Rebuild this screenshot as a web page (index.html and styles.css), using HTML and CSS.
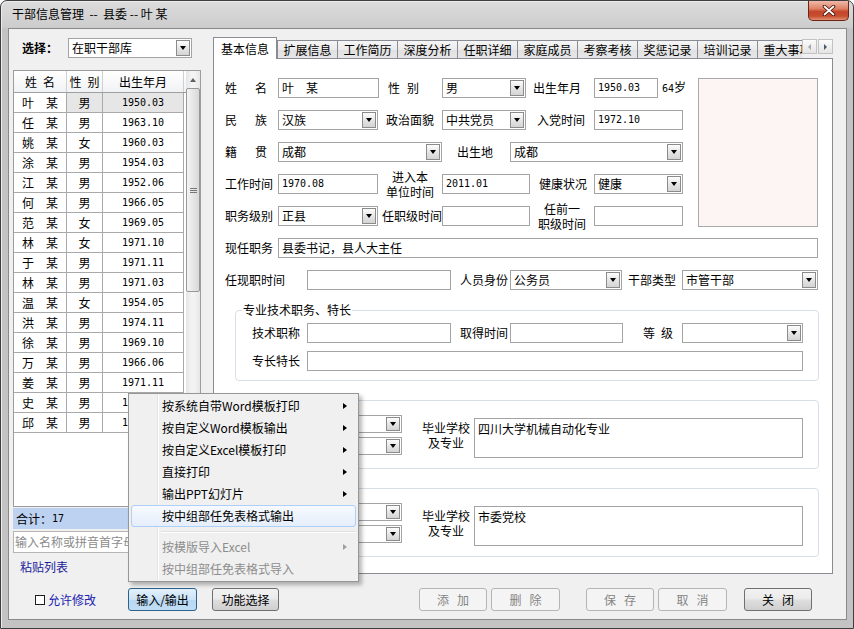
FILE: index.html
```html
<!DOCTYPE html>
<html lang="zh-CN">
<head>
<meta charset="utf-8">
<title>干部信息管理</title>
<link rel="stylesheet" href="styles.css">
</head>
<body>
<div class="win">
  <div class="titlebar">
    <span class="title">干部信息管理  --  县委 -- 叶 某</span>
    <div class="close"><svg width="14" height="11" viewBox="0 0 14 11"><path d="M2.5 1.5 L11.5 9.5 M11.5 1.5 L2.5 9.5" stroke="#4a1208" stroke-width="3.6" stroke-linecap="round"/><path d="M2.5 1.5 L11.5 9.5 M11.5 1.5 L2.5 9.5" stroke="#fff" stroke-width="1.8" stroke-linecap="round"/></svg></div>
  </div>
  <div class="client">
    <div class="main">
      <div class="left">
        <div class="selrow"><span class="sellbl">选择：</span><div class="f sel combo"><span class="tx">在职干部库</span><span class="dd"></span></div></div>
        <div class="gridbox">
          <div class="gridarea">
            <div class="gh"><div class="c c1"><span class="ls6">姓</span>名</div><div class="c c2"><span class="ls6">性</span>别</div><div class="c c3">出生年月</div></div>
            <div class="gr cur"><div class="c c1">叶　某</div><div class="c c2">男</div><div class="c c3 num">1950.03</div></div>
            <div class="gr"><div class="c c1">任　某</div><div class="c c2">男</div><div class="c c3 num">1963.10</div></div>
            <div class="gr"><div class="c c1">姚　某</div><div class="c c2">女</div><div class="c c3 num">1960.03</div></div>
            <div class="gr"><div class="c c1">涂　某</div><div class="c c2">男</div><div class="c c3 num">1954.03</div></div>
            <div class="gr"><div class="c c1">江　某</div><div class="c c2">男</div><div class="c c3 num">1952.06</div></div>
            <div class="gr"><div class="c c1">何　某</div><div class="c c2">男</div><div class="c c3 num">1966.05</div></div>
            <div class="gr"><div class="c c1">范　某</div><div class="c c2">女</div><div class="c c3 num">1969.05</div></div>
            <div class="gr"><div class="c c1">林　某</div><div class="c c2">女</div><div class="c c3 num">1971.10</div></div>
            <div class="gr"><div class="c c1">于　某</div><div class="c c2">男</div><div class="c c3 num">1971.11</div></div>
            <div class="gr"><div class="c c1">林　某</div><div class="c c2">男</div><div class="c c3 num">1971.03</div></div>
            <div class="gr"><div class="c c1">温　某</div><div class="c c2">女</div><div class="c c3 num">1954.05</div></div>
            <div class="gr"><div class="c c1">洪　某</div><div class="c c2">男</div><div class="c c3 num">1974.11</div></div>
            <div class="gr"><div class="c c1">徐　某</div><div class="c c2">男</div><div class="c c3 num">1969.10</div></div>
            <div class="gr"><div class="c c1">万　某</div><div class="c c2">男</div><div class="c c3 num">1966.06</div></div>
            <div class="gr"><div class="c c1">姜　某</div><div class="c c2">男</div><div class="c c3 num">1971.11</div></div>
            <div class="gr"><div class="c c1">史　某</div><div class="c c2">男</div><div class="c c3 num">1968.02</div></div>
            <div class="gr"><div class="c c1">邱　某</div><div class="c c2">男</div><div class="c c3 num">1970.05</div></div>
          </div>
          <div class="vscroll">
            <div class="sbtn"><span class="tri-up"></span></div>
            <div class="thumb"><span class="grip"></span></div>
            <div class="track"></div>
            <div class="sbtn"><span class="tri-down"></span></div>
          </div>
        </div>
        <div class="total">合计：<span class="num">17</span></div>
        <div class="search">输入名称或拼音首字母查询</div>
        <div class="paste">粘贴列表</div>
      </div>

      <div class="tabctl">
        <div class="strip">
          <div class="tablist">
            <div class="tab on">基本信息</div>
            <div class="tab">扩展信息</div>
            <div class="tab">工作简历</div>
            <div class="tab">深度分析</div>
            <div class="tab">任职详细</div>
            <div class="tab">家庭成员</div>
            <div class="tab">考察考核</div>
            <div class="tab">奖惩记录</div>
            <div class="tab">培训记录</div>
            <div class="tab">重大事项</div>
          </div>
          <div class="tarrs">
            <div class="tarr"><span class="tri-l"></span></div>
            <div class="tarr"><span class="tri-r"></span></div>
          </div>
        </div>
        <div class="page">
          <div class="top">
            <div class="topl">
              <div class="row">
                <span class="lb w53"><span class="ls18">姓</span>名</span>
                <div class="f w101">叶　某</div>
                <span class="lb w63 pl9"><span class="ls7">性</span>别</span>
                <div class="f sel w84"><span class="tx">男</span><span class="dd"></span></div>
                <span class="lb w68 pl7">出生年月</span>
                <div class="f w64"><span class="num">1950.03</span></div>
                <span class="lb pl4"><span class="num">64</span>岁</span>
              </div>
              <div class="row">
                <span class="lb w53"><span class="ls18">民</span>族</span>
                <div class="f sel w100"><span class="tx">汉族</span><span class="dd"></span></div>
                <span class="lb w64 pl8">政治面貌</span>
                <div class="f sel w84"><span class="tx">中共党员</span><span class="dd"></span></div>
                <span class="lb w68 pl11">入党时间</span>
                <div class="f w89"><span class="num">1972.10</span></div>
              </div>
              <div class="row">
                <span class="lb w53"><span class="ls18">籍</span>贯</span>
                <div class="f sel w164"><span class="tx">成都</span><span class="dd"></span></div>
                <span class="lb w68 pl15">出生地</span>
                <div class="f sel w173"><span class="tx">成都</span><span class="dd"></span></div>
              </div>
              <div class="row">
                <span class="lb w53">工作时间</span>
                <div class="f w100"><span class="num">1970.08</span></div>
                <span class="lb2 w64">进入本<br>单位时间</span>
                <div class="f w88"><span class="num">2011.01</span></div>
                <span class="lb w64 pl9">健康状况</span>
                <div class="f sel w89"><span class="tx">健康</span><span class="dd"></span></div>
              </div>
              <div class="row">
                <span class="lb w53">职务级别</span>
                <div class="f sel w100"><span class="tx">正县</span><span class="dd"></span></div>
                <span class="lb w64 pl4">任职级时间</span>
                <div class="f w88"></div>
                <span class="lb2 w64">任前一<br>职级时间</span>
                <div class="f w89"></div>
              </div>
            </div>
            <div class="photo"></div>
          </div>
          <div class="row">
            <span class="lb w53">现任职务</span>
            <div class="f w540">县委书记，县人大主任</div>
          </div>
          <div class="row last">
            <span class="lb w82">任现职时间</span>
            <div class="f w144"></div>
            <span class="lb w59 pl9">人员身份</span>
            <div class="f sel w112"><span class="tx">公务员</span><span class="dd"></span></div>
            <span class="lb w60 pl6">干部类型</span>
            <div class="f sel w136"><span class="tx">市管干部</span><span class="dd"></span></div>
          </div>

          <div class="grp g1">
            <div class="gt">专业技术职务、特长</div>
            <div class="grow first">
              <span class="lb w71 pl16">技术职称</span>
              <div class="f w144"></div>
              <span class="lb w59 pl9">取得时间</span>
              <div class="f w113"></div>
              <span class="lb w59 pl20"><span class="ls6">等</span>级</span>
              <div class="f sel w121"><span class="tx"></span><span class="dd"></span></div>
            </div>
            <div class="grow">
              <span class="lb w71 pl16">专长特长</span>
              <div class="f w496"></div>
            </div>
          </div>

          <div class="grp g2">
            <div class="gt gap"></div>
            <div class="edu">
              <div class="educol">
                <div class="er"><span class="lb w66"></span><div class="f sel h18 w100"><span class="tx"></span><span class="dd"></span></div></div>
                <div class="er"><span class="lb w66"></span><div class="f sel h18 w100"><span class="tx"></span><span class="dd"></span></div></div>
              </div>
              <span class="lb2 edul">毕业学校<br>及专业</span>
              <div class="f ta">四川大学机械自动化专业</div>
            </div>
          </div>

          <div class="grp g2">
            <div class="gt gap"></div>
            <div class="edu">
              <div class="educol">
                <div class="er"><span class="lb w66"></span><div class="f sel h18 w100"><span class="tx"></span><span class="dd"></span></div></div>
                <div class="er"><span class="lb w66"></span><div class="f sel h18 w100"><span class="tx"></span><span class="dd"></span></div></div>
              </div>
              <span class="lb2 edul">毕业学校<br>及专业</span>
              <div class="f ta">市委党校</div>
            </div>
          </div>
        </div>
      </div>
    </div>

    <div class="bottom">
      <div class="chkgrp"><span class="cb"></span><span class="chklbl">允许修改</span></div>
      <div class="btn b-io">输入/输出</div>
      <div class="btn b-fn">功能选择</div>
      <div class="btn dis b-add"><span class="ls8">添</span>加</div>
      <div class="btn dis b-del"><span class="ls8">删</span>除</div>
      <div class="btn dis b-save"><span class="ls8">保</span>存</div>
      <div class="btn dis b-cancel"><span class="ls8">取</span>消</div>
      <div class="btn b-close"><span class="ls8">关</span>闭</div>
    </div>
  </div>

  <div class="menu">
    <div class="mi">按系统自带Word模板打印<i class="arr"></i></div>
    <div class="mi">按自定义Word模板输出<i class="arr"></i></div>
    <div class="mi">按自定义Excel模板打印<i class="arr"></i></div>
    <div class="mi">直接打印<i class="arr"></i></div>
    <div class="mi">输出PPT幻灯片<i class="arr"></i></div>
    <div class="mi hl">按中组部任免表格式输出</div>
    <div class="msep"></div>
    <div class="mi dis">按模版导入Excel<i class="arr"></i></div>
    <div class="mi dis">按中组部任免表格式导入</div>
  </div>
</div>
</body>
</html>
```
FILE: styles.css
```css
*{box-sizing:border-box}
html,body{margin:0;padding:0}
body{width:854px;height:629px;overflow:hidden;background:#fff;font-family:"Noto Sans CJK SC","Noto Sans",sans-serif;font-size:12px;line-height:14px;color:#000}
.num{font-family:"DejaVu Sans Mono","Liberation Mono",monospace;font-size:10px}

/* window frame */
.win{position:relative;width:854px;height:629px;border:1px solid #3e3e3e;border-radius:7px 7px 0 0;background:linear-gradient(#dcdcdc 0,#cdcdcd 26px,#c3c3c3 28px,#c3c3c3 100%);display:flex;flex-direction:column;box-shadow:inset 1px 1px 0 #ececec}
.titlebar{height:27px;flex:none;display:flex;align-items:flex-start;padding-left:11px}
.title{margin-top:6px;white-space:pre}
.close{margin-left:auto;margin-right:4px;width:41px;height:20px;border:1px solid #6a2418;border-top:0;border-radius:0 0 5px 5px;background:linear-gradient(#f0b9a9 0,#de8367 40%,#c4452b 56%,#c84f31 80%,#e29072 100%);display:flex;align-items:center;justify-content:center}
.client{flex:none;margin:0 6px 0 7px;height:592px;border:1px solid #8a8a8a;background:#f0f0f0;display:flex;flex-direction:column}
.main{display:flex;height:549px;flex:none}

/* left panel */
.left{margin-left:4px;width:188px;flex:none;display:flex;flex-direction:column}
.selrow{margin-top:9px;height:19px;display:flex;align-items:center;padding-left:9px}
.sellbl{width:46px;font-weight:bold;flex:none}
.combo{width:124px;height:19px}
.gridbox{margin-top:13px;height:437px;border:1px solid #9c9c9c;background:#fff;display:flex}
.gridarea{width:172px;flex:none}
.gh{display:flex;height:22px;border-bottom:1px solid #a0a0a0;background:linear-gradient(#ffffff,#f1f2f4)}
.gh .c{border-right:1px solid #d0d0d0}
.gr{display:flex;height:20px;border-bottom:1px solid #a9a9a9;width:170px}
.c{display:flex;align-items:center;justify-content:center;flex:none;border-right:1px solid #a9a9a9;white-space:nowrap}
.c1{width:53px}
.c2{width:36px}
.c3{width:81px}
.gr.cur .c2,.gr.cur .c3{background:#e6e6e6}
.ls6{margin-right:6px}
.ls7{margin-right:7px}
.ls8{margin-right:8px}
.ls18{margin-right:18px}
.vscroll{width:14px;flex:none;display:flex;flex-direction:column;background:linear-gradient(to right,#e6e6e6,#f3f3f3 40%,#f3f3f3 60%,#e6e6e6)}
.sbtn{height:17px;flex:none;display:flex;align-items:center;justify-content:center}
.tri-up{width:0;height:0;border-left:3.5px solid transparent;border-right:3.5px solid transparent;border-bottom:4px solid #606060}
.tri-down{width:0;height:0;border-left:3.5px solid transparent;border-right:3.5px solid transparent;border-top:4px solid #606060}
.thumb{height:204px;flex:none;border:1px solid #989898;border-radius:2px;background:linear-gradient(to right,#f4f4f4,#e6e6e6 50%,#d8d8d8);display:flex;align-items:center;justify-content:center}
.grip{width:7px;height:5px;background:linear-gradient(#777 0,#777 1px,transparent 1px,transparent 2px,#777 2px,#777 3px,transparent 3px,transparent 4px,#777 4px,#777 5px)}
.track{flex:1}
.total{margin-top:1px;height:21px;background:#bdd2f0;padding-left:3px;display:flex;align-items:center}
.search{margin-top:2px;height:22px;border:1px solid #b5b5b5;background:#fff;color:#8b8b8b;padding-left:1px;display:flex;align-items:center;white-space:nowrap;overflow:hidden;line-height:16px}
.paste{margin-top:4px;height:20px;line-height:20px;padding-left:7px;color:#1c1c9c}

/* tab control */
.tabctl{margin-left:12px;margin-top:8px;width:620px;flex:none;display:flex;flex-direction:column}
.strip{display:flex;height:22px;flex:none}
.tablist{width:589px;flex:none;display:flex;overflow:hidden;background:linear-gradient(#898c95,#898c95) left bottom/100% 1px no-repeat}
.tab{flex:none;width:61px;margin-right:-1px;height:19px;margin-top:3px;border:1px solid #898c95;background:linear-gradient(#f5f5f5,#ebebeb 50%,#e0e0e0 51%,#e7e7e7);display:flex;align-items:center;justify-content:center;white-space:nowrap}
.tab.on{width:64px;height:22px;margin-top:0;margin-right:0;border-bottom:0;background:#fff;position:relative;z-index:1}
.tarrs{flex:1;display:flex;background:linear-gradient(#898c95,#898c95) left bottom/100% 1px no-repeat}
.tarr{width:15px;height:15px;margin-top:2px;border:1px solid #c2c2c2;background:linear-gradient(#fbfbfb,#e4e4e4);display:flex;align-items:center;justify-content:center}
.tarr+.tarr{margin-left:1px}
.tri-l{width:0;height:0;border-top:3px solid transparent;border-bottom:3px solid transparent;border-right:3px solid #a8a8a8}
.tri-r{width:0;height:0;border-top:3px solid transparent;border-bottom:3px solid transparent;border-left:3px solid #4a5670}
.page{height:515px;border:1px solid #898c95;border-top:0;background:#fff;padding:19px 0 0 11px}

/* form */
.top{display:flex;align-items:flex-start}
.topl{width:460px;flex:none}
.photo{margin-left:13px;width:120px;height:149px;flex:none;border:1px solid #a9a9a9;background:#fdf4f4}
.row{display:flex;align-items:center;height:20px;margin-bottom:12px}
.row.last{margin-bottom:0}
.lb{flex:none;white-space:nowrap}
.lb2{flex:none;white-space:nowrap;text-align:center;line-height:15px}
.f{flex:none;height:20px;border:1px solid #a4a4a4;background:#fff;display:flex;align-items:center;padding-left:3px;white-space:nowrap;overflow:hidden;line-height:16px}
.f.h18{height:18px}
.sel{padding-right:1px}
.tx{flex:1;overflow:hidden}
.dd{flex:none;width:14px;height:16px;border:1px solid #8b8b8b;background:linear-gradient(#fdfdfd,#e6e6e6 50%,#d4d4d4);display:flex;align-items:center;justify-content:center}
.h18 .dd{height:14px}
.dd::after{content:"";width:0;height:0;border-left:3.5px solid transparent;border-right:3.5px solid transparent;border-top:4px solid #000}
.w53{width:53px}.w59{width:59px}.w60{width:60px}.w63{width:63px}.w64{width:64px}.w66{width:66px}.w68{width:68px}.w71{width:71px}.w82{width:82px}
.w84{width:84px}.w88{width:88px}.w89{width:89px}.w100{width:100px}.w101{width:101px}.w112{width:112px}.w113{width:113px}.w121{width:121px}
.w136{width:136px}.w144{width:144px}.w164{width:164px}.w173{width:173px}.w496{width:496px}.w540{width:540px}
.pl4{padding-left:4px}.pl6{padding-left:6px}.pl7{padding-left:7px}.pl8{padding-left:8px}.pl9{padding-left:9px}.pl11{padding-left:11px}
.pl15{padding-left:15px}.pl16{padding-left:16px}.pl20{padding-left:20px}

/* group boxes */
.grp{margin-left:10px;width:584px;border:1px solid #d5dfe5;border-radius:4px}
.g1{margin-top:20px;padding-bottom:9px}
.g2{margin-top:19px;padding-bottom:10px}
.gt{width:max-content;height:14px;margin:-8px 0 0 6px;padding:0 1px;background:#fff;line-height:14px}
.gt.gap{width:0;padding:0;background:none}
.grow{display:flex;align-items:center;height:20px;margin-top:8px}
.grow.first{margin-top:6px}
.edu{display:flex;align-items:flex-start;margin-top:8px}
.educol{display:flex;flex-direction:column;flex:none}
.er{display:flex;align-items:center;height:18px}
.er+.er{margin-top:4px}
.edul{width:72px;padding:5px 4px 0 20px;line-height:15px}
.f.ta{display:block;width:329px;height:40px;margin-top:3px;padding:2px 3px;line-height:16px}

/* bottom bar */
.bottom{flex:1;display:flex;align-items:flex-start;padding-top:10px}
.chkgrp{margin-left:26px;width:93px;height:23px;flex:none;display:flex;align-items:center}
.cb{width:10px;height:10px;border:1px solid #1e1e1e;background:#fff;flex:none}
.chklbl{margin-left:3px;color:#2020b0}
.btn{flex:none;height:23px;display:flex;align-items:center;justify-content:center;border:1px solid #707070;border-radius:3px;background:linear-gradient(#f2f2f2,#ebebeb 45%,#dddddd 55%,#cfcfcf);white-space:nowrap}
.btn.dis{border-color:#b3b6b8;background:#f4f4f4;color:#858585}
.b-io{width:69px;border-color:#2c628b;background:linear-gradient(#e2f0fb,#cbe3f7 50%,#b7d8f3 52%,#c0ddf4)}
.b-fn{margin-left:15px;width:67px}
.b-add{margin-left:140px;width:68px}
.b-del{margin-left:4px;width:69px}
.b-save{margin-left:26px;width:68px}
.b-cancel{margin-left:4px;width:69px}
.b-close{margin-left:17px;width:68px}

/* context menu (overlay) */
.menu{position:absolute;left:127px;top:392px;width:231px;height:189px;border:1px solid #979797;padding:1px 2px;background:linear-gradient(to right,transparent 28px,#e2e3e3 28px,#e2e3e3 29px,#fff 29px,#fff 30px,transparent 30px),#f0f0f0;box-shadow:3px 3px 4px rgba(0,0,0,.28);z-index:10}
.mi{height:22px;display:flex;align-items:center;padding-left:30px;padding-right:8px;border:1px solid transparent;border-radius:3px;white-space:nowrap}
.mi.hl{border-color:#aecff7;background:linear-gradient(#f7fafe,#e5eefb)}
.mi.dis{color:#8d8d8d}
.arr{margin-left:auto;width:0;height:0;border-top:3.5px solid transparent;border-bottom:3.5px solid transparent;border-left:4px solid #000}
.mi.dis .arr{border-left-color:#a0a0a0}
.msep{height:9px;margin-left:30px;background:linear-gradient(#e0e0e0,#e0e0e0) 0 4px/100% 1px no-repeat,linear-gradient(#fff,#fff) 0 5px/100% 1px no-repeat}
```
